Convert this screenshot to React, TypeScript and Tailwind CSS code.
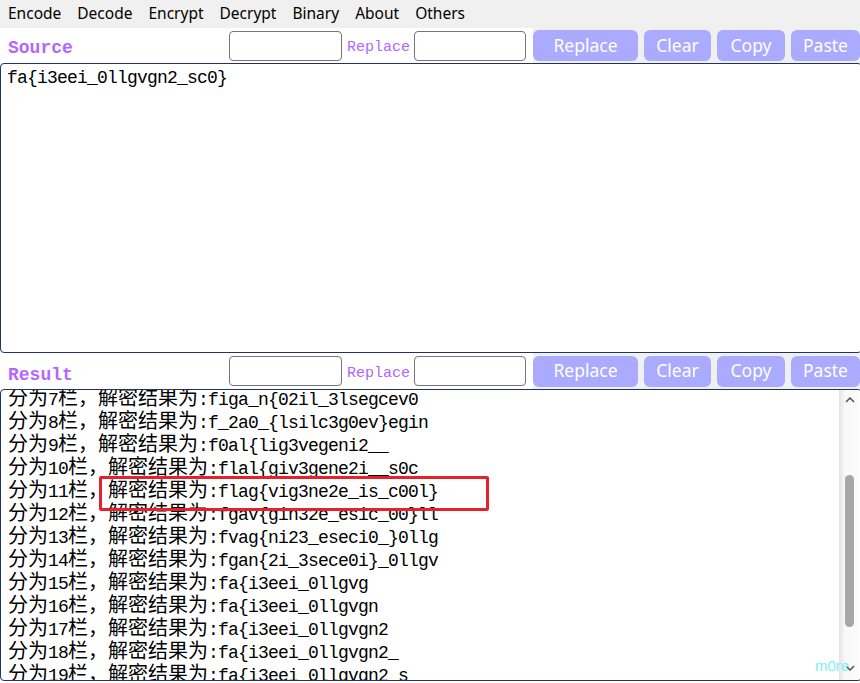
import React from 'react';

const MENU = ['Encode', 'Decode', 'Encrypt', 'Decrypt', 'Binary', 'About', 'Others'];

const RESULTS: [number, string][] = [
    [7, 'figa_n{02il_3lsegcev0'],
    [8, 'f_2a0_{lsilc3g0ev}egin'],
    [9, 'f0al{lig3vegeni2__'],
    [10, 'flal{giv3gene2i__s0c'],
    [11, 'flag{vig3ne2e_is_c00l}'],
    [12, 'fgav{gin32e_esic_00}ll'],
    [13, 'fvag{ni23_eseci0_}0llg'],
    [14, 'fgan{2i_3sece0i}_0llgv'],
    [15, 'fa{i3eei_0llgvg'],
    [16, 'fa{i3eei_0llgvgn'],
    [17, 'fa{i3eei_0llgvgn2'],
    [18, 'fa{i3eei_0llgvgn2_'],
    [19, 'fa{i3eei_0llgvgn2_s'],
];

const CJK = /[\u3000-\u9fff\uff00-\uffef]/;

// split a line into cjk / latin runs so each gets its own font
function Line({ text }: { text: string }) {
    const runs = text.match(/[\u3000-\u9fff\uff00-\uffef]+|[^\u3000-\u9fff\uff00-\uffef]+/g) ?? [];
    return (
        <div className="h-[23px] leading-[23px] whitespace-pre text-black">
            {runs.map((r, i) =>
                CJK.test(r) ? (
                    <span key={i} className="font-['Noto_Sans_CJK_SC',sans-serif] text-[20px] leading-[23px]">{r}</span>
                ) : (
                    <span key={i} className="font-['Liberation_Mono',monospace] text-[18px] tracking-[-0.8px] leading-[23px]">{r}</span>
                )
            )}
        </div>
    );
}

function ToolRow({ label, tall }: { label: string; tall?: boolean }) {
    return (
        <div className={`flex items-stretch ${tall ? 'h-[36px]' : 'h-[35px]'}`}>
            <div className={`w-[229px] flex items-center pl-2 font-['Liberation_Mono',monospace] text-[18px] font-bold text-[#b366ff] ${tall ? 'pt-[9px]' : 'pt-[5px]'}`}>
                {label}
            </div>
            <div className="flex items-center">
                <input className="w-[113px] h-[30px] border border-[#767676] rounded-[4px] bg-white outline-none" />
            </div>
            <div className="flex items-center pt-[6px] ml-[5px] mr-[4px] font-['Liberation_Mono',monospace] text-[15px] text-[#b366ff]">
                Replace
            </div>
            <div className="flex items-center">
                <input className="w-[112px] h-[30px] border border-[#767676] rounded-[4px] bg-white outline-none" />
            </div>
            <div className="ml-[7px] flex flex-1 items-center gap-[6px] bg-[#f0f0f0]">
                {[
                    ['Replace', 'w-[105px]'],
                    ['Clear', 'w-[67px]'],
                    ['Copy', 'w-[68px]'],
                    ['Paste', 'flex-1'],
                ].map(([t, w]) => (
                    <button
                        key={t}
                        className={`${w} h-[31px] rounded-[6px] bg-[#aaaaff] text-white font-['Noto_Sans',sans-serif] text-[17.5px] leading-none`}
                    >
                        {t}
                    </button>
                ))}
            </div>
        </div>
    );
}

function Chevron({ up }: { up?: boolean }) {
    return (
        <svg width="10" height="6" viewBox="0 0 10 6" className="block">
            <path
                d={up ? 'M1 5 L5 1 L9 5' : 'M1 1 L5 5 L9 1'}
                fill="none"
                stroke="#505050"
                strokeWidth="1.5"
            />
        </svg>
    );
}

export default function App() {
    return (
        <div className="w-full h-[683px] overflow-hidden bg-white">
            {/* menu */}
            <div className="h-7 flex items-center bg-[#f0f0f0] font-['Noto_Sans',sans-serif] text-[15.5px] text-black">
                {MENU.map((m) => (
                    <span key={m} className="px-2">{m}</span>
                ))}
            </div>

            <ToolRow label="Source" />
            <textarea
                className="block w-[calc(100%+2px)] h-[290px] resize-none border border-[#1c3466] rounded-[4px] px-[6px] py-[3px] font-['Liberation_Mono',monospace] text-[18px] tracking-[-0.8px] leading-[23px] text-black outline-none"
                defaultValue="fa{i3eei_0llgvgn2_sc0}"
            />

            <ToolRow label="Result" tall />
            <div className="relative flex w-[calc(100%+2px)] h-[292px] border border-[#1c3466] rounded-[4px] overflow-hidden">
                <div className="flex-1 overflow-hidden pl-[7px]">
                    <div className="-mt-[5px]">
                        {RESULTS.map(([n, s]) => (
                            <Line key={n} text={`分为${n}栏，解密结果为:${s}`} />
                        ))}
                    </div>
                </div>
                {/* scrollbar */}
                <div className="w-[20px] mr-[2px] flex flex-col items-center bg-linear-to-r from-[#e2e2e2] via-[#f9f9f9] via-30% to-[#fbfbfb]">
                    <div className="h-[20px] flex items-center pl-[1px]"><Chevron up /></div>
                    <div className="flex-1 w-full flex flex-col items-center">
                        <div className="h-[65px]" />
                        <div className="w-[9px] h-[152px] rounded-full bg-[#a6a6a6]" />
                    </div>
                    <div className="h-[24px] flex items-center pl-[1px]"><Chevron /></div>
                </div>
                {/* highlight */}
                <div className="absolute left-[98px] top-[86px] w-[390px] h-[35px] border-[3px] border-[#e5212b] rounded-[2px]" />
                <span className="absolute left-[814px] top-[265px] font-['Liberation_Sans',sans-serif] text-[15px] text-[#7ef0f0]">m0re</span>
            </div>
        </div>
    );
}
